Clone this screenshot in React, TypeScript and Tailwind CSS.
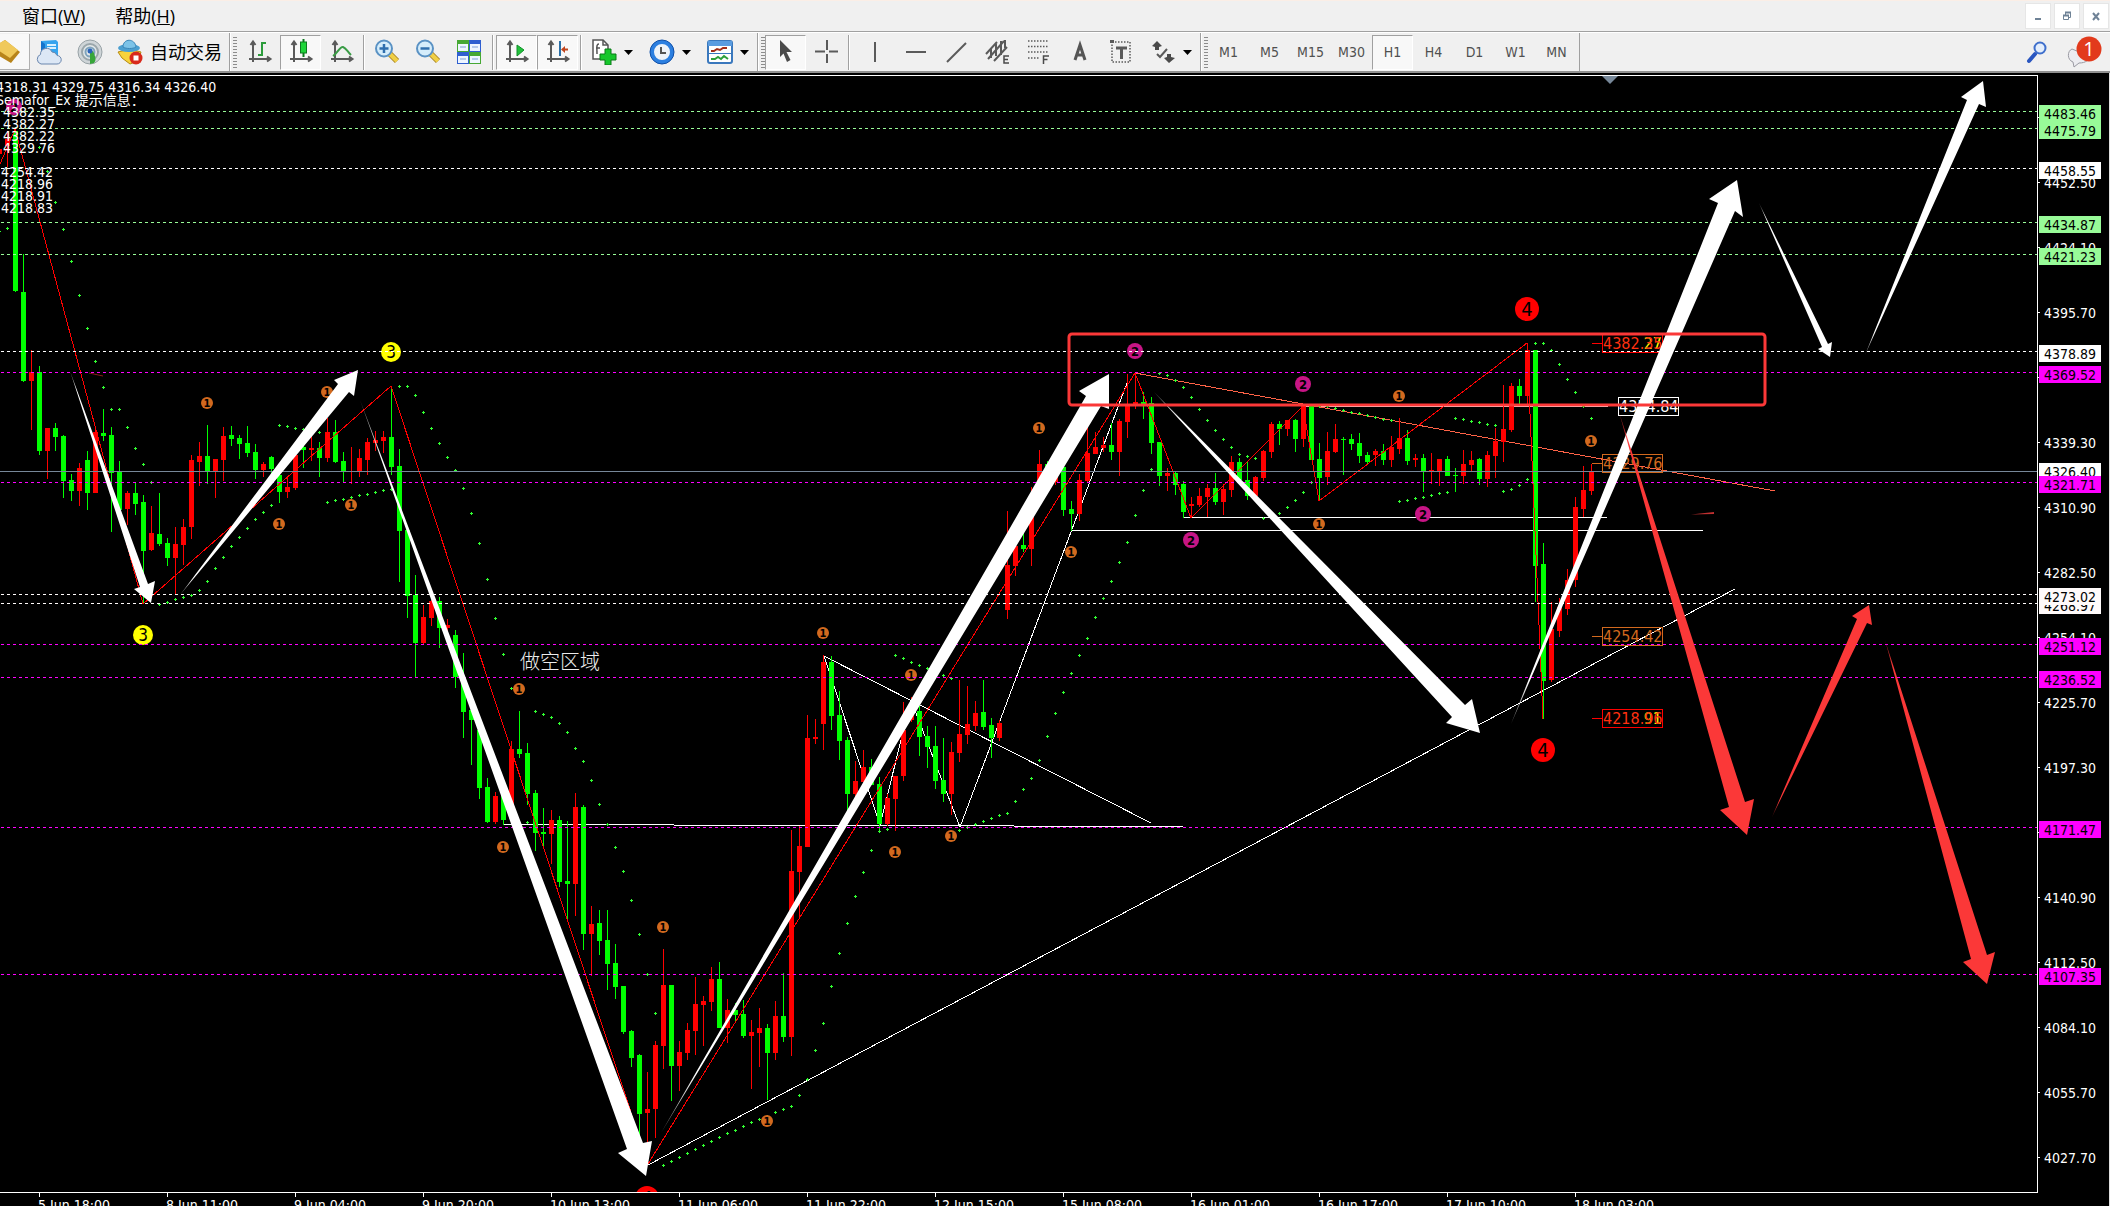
import { Fragment, type ReactNode } from "react";
import clsx from "clsx";

type Point = [number, number];

// [bullish, high, low, body top, body bottom], one entry every 8px
const candles: number[][] = [
  [1, 131, 167, 139, 146], [0, 127, 292, 131, 291], [0, 254, 382, 292, 381], [1, 350, 430, 372, 381],
  [0, 366, 455, 372, 451], [1, 428, 479, 428, 451], [0, 423, 451, 428, 437], [0, 435, 498, 436, 481],
  [0, 474, 501, 480, 491], [1, 463, 506, 468, 491], [0, 451, 510, 460, 493], [1, 428, 493, 432, 493],
  [0, 409, 441, 433, 436], [0, 427, 532, 435, 473], [0, 461, 512, 472, 510], [1, 491, 525, 493, 509],
  [0, 483, 515, 493, 504], [0, 495, 604, 502, 551], [1, 506, 551, 533, 550], [0, 493, 546, 534, 544],
  [0, 538, 566, 543, 558], [1, 527, 594, 544, 558], [1, 519, 565, 527, 545], [1, 455, 539, 460, 527],
  [1, 442, 486, 456, 462], [0, 425, 484, 456, 471], [1, 459, 498, 459, 471], [1, 427, 481, 436, 460],
  [0, 426, 446, 435, 439], [0, 435, 459, 438, 444], [0, 426, 457, 443, 453], [0, 444, 479, 452, 470],
  [1, 462, 477, 464, 470], [0, 456, 475, 457, 469], [0, 469, 503, 475, 492], [1, 477, 498, 487, 492],
  [1, 453, 490, 455, 488], [0, 445, 468, 447, 450], [1, 435, 461, 448, 450], [0, 442, 477, 448, 458],
  [1, 418, 462, 432, 458], [0, 420, 463, 432, 462], [0, 452, 482, 461, 472], [1, 447, 484, 471, 472],
  [1, 449, 477, 458, 472], [1, 438, 475, 442, 460], [1, 431, 451, 440, 443], [1, 431, 453, 437, 441],
  [0, 387, 475, 437, 467], [0, 449, 582, 466, 531], [0, 530, 618, 530, 596], [0, 575, 677, 595, 643],
  [1, 605, 645, 617, 643], [1, 600, 626, 601, 618], [0, 597, 648, 601, 628], [1, 619, 632, 625, 628],
  [0, 630, 688, 635, 677], [0, 653, 738, 677, 712], [0, 707, 765, 710, 720], [0, 730, 799, 730, 788],
  [0, 778, 823, 787, 822], [1, 792, 824, 796, 822], [0, 793, 825, 795, 820], [1, 741, 813, 749, 813],
  [0, 711, 758, 749, 754], [0, 743, 805, 753, 794], [0, 790, 851, 793, 833], [0, 808, 847, 832, 834],
  [1, 810, 864, 820, 834], [0, 816, 887, 820, 882], [0, 821, 921, 881, 884], [1, 793, 916, 807, 884],
  [0, 805, 950, 807, 934], [1, 906, 976, 924, 934], [0, 910, 955, 923, 941], [0, 910, 990, 940, 964],
  [0, 944, 999, 963, 987], [0, 986, 1034, 986, 1032], [0, 1030, 1067, 1031, 1058], [0, 1054, 1140, 1055, 1114],
  [1, 1072, 1147, 1109, 1113], [1, 1041, 1138, 1045, 1109], [1, 949, 1069, 985, 1046], [0, 985, 1101, 985, 1066],
  [1, 1041, 1091, 1052, 1066], [1, 1023, 1060, 1030, 1053], [1, 977, 1055, 1004, 1031], [1, 996, 1046, 1001, 1005],
  [1, 967, 1011, 979, 1002], [0, 962, 1028, 979, 1028], [1, 999, 1043, 1010, 1028], [0, 1003, 1022, 1010, 1015],
  [0, 1000, 1038, 1014, 1036], [1, 1020, 1089, 1032, 1036], [1, 1008, 1067, 1028, 1033], [0, 1024, 1100, 1028, 1053],
  [1, 1001, 1060, 1016, 1053], [0, 973, 1042, 1016, 1037], [1, 830, 1056, 871, 1037], [1, 826, 919, 846, 872],
  [1, 715, 847, 738, 847], [1, 719, 744, 737, 739], [1, 655, 750, 662, 724], [0, 656, 730, 662, 716],
  [0, 691, 760, 715, 741], [0, 737, 813, 740, 794], [1, 761, 797, 781, 794], [1, 750, 782, 767, 782],
  [0, 759, 785, 767, 785], [0, 777, 831, 784, 824], [1, 794, 826, 798, 824], [1, 776, 831, 776, 799],
  [1, 702, 781, 730, 776], [1, 697, 722, 708, 720], [0, 706, 756, 711, 737], [0, 726, 768, 736, 747],
  [0, 726, 789, 746, 781], [0, 738, 802, 780, 794], [1, 742, 815, 752, 794], [1, 680, 762, 734, 753],
  [1, 686, 744, 724, 735], [1, 701, 731, 713, 726], [0, 680, 730, 712, 727], [0, 718, 758, 725, 738],
  [1, 720, 741, 723, 738], [1, 511, 619, 565, 610], [1, 543, 576, 546, 566], [0, 532, 552, 545, 549],
  [1, 487, 566, 517, 549], [1, 450, 482, 464, 482], [0, 461, 482, 464, 480], [1, 470, 485, 472, 482],
  [0, 467, 516, 467, 510], [0, 501, 531, 509, 514], [1, 474, 521, 480, 514], [1, 427, 482, 453, 481],
  [1, 432, 454, 447, 454], [1, 437, 452, 445, 448], [0, 423, 460, 445, 452], [1, 419, 476, 421, 452],
  [1, 374, 438, 405, 422], [1, 373, 409, 402, 404], [0, 392, 419, 402, 404], [0, 397, 454, 403, 443],
  [0, 442, 486, 442, 476], [1, 468, 491, 473, 476], [0, 472, 495, 473, 485], [0, 481, 518, 484, 512],
  [1, 497, 518, 504, 506], [1, 488, 507, 496, 505], [1, 484, 517, 488, 497], [0, 473, 505, 488, 502],
  [1, 484, 515, 489, 502], [1, 456, 497, 462, 490], [0, 458, 480, 462, 480], [0, 461, 500, 480, 496],
  [1, 476, 496, 477, 496], [1, 450, 481, 451, 478], [1, 422, 458, 424, 452], [0, 421, 445, 424, 429],
  [1, 420, 436, 420, 429], [0, 419, 452, 420, 439], [1, 406, 447, 406, 439], [0, 406, 460, 406, 460],
  [0, 443, 501, 459, 478], [1, 432, 485, 451, 477], [1, 424, 453, 439, 452], [0, 437, 475, 439, 440],
  [0, 434, 450, 439, 444], [0, 433, 463, 443, 456], [0, 452, 465, 455, 462], [1, 449, 466, 451, 455],
  [0, 444, 465, 451, 460], [1, 436, 467, 447, 460], [1, 418, 454, 438, 449], [0, 430, 465, 438, 461],
  [1, 454, 467, 458, 460], [0, 454, 492, 458, 471], [1, 453, 484, 470, 471], [1, 459, 486, 459, 471],
  [0, 456, 476, 459, 476], [0, 468, 492, 475, 476], [1, 450, 484, 464, 476], [1, 451, 471, 460, 465],
  [0, 458, 485, 459, 479], [1, 451, 487, 455, 479], [1, 428, 478, 441, 456], [1, 385, 462, 429, 442],
  [1, 383, 432, 386, 430], [0, 379, 404, 386, 396], [1, 343, 404, 350, 396], [0, 350, 602, 350, 566],
  [0, 543, 719, 564, 681], [1, 602, 682, 629, 680], [1, 598, 637, 607, 631], [1, 569, 615, 580, 609],
  [1, 497, 587, 507, 580], [1, 466, 517, 490, 509], [1, 464, 495, 471, 491],
];

// parabolic SAR: first column, then a y for each following candle
const sarRuns: [number, number[]][] = [
  [-1, [231, 228]],
  [39, [147, 171, 202, 229, 261, 295, 328, 361, 387, 409, 409, 427, 448, 464, 482]],
  [159, [604, 602, 599, 597, 595, 590, 581, 568, 557, 546, 537, 528, 519, 512, 505]],
  [279, [425, 426, 428, 429, 430, 432]],
  [327, [502, 500, 499, 497, 495, 494, 492, 490, 489]],
  [399, [386, 386, 395, 412, 428, 443, 457, 470, 488, 513, 543, 579, 618, 654, 688]],
  [527, [822]],
  [535, [711, 714, 717, 723, 732, 748, 761, 780, 804, 824, 847, 871, 900, 934, 974, 1013]],
  [663, [1165, 1161, 1157, 1153, 1149, 1145, 1141, 1137, 1133, 1130, 1126, 1122, 1119, 1116, 1112, 1109, 1106, 1095,
    1079, 1050, 1023, 986, 953, 923, 896, 872, 850, 831, 829]],
  [895, [655, 658, 662, 665, 668, 672, 675, 678]],
  [959, [830, 827, 824, 821, 818, 815, 813, 801, 789, 778, 760, 736, 713, 692, 673, 655, 638, 617, 598, 581, 562, 542,
    515, 490, 469]],
  [1159, [373, 375, 380, 387, 397, 409, 420, 430, 439, 447, 454, 456, 458]],
  [1263, [518, 516, 513, 507, 500, 492, 482]],
  [1319, [406, 406, 408, 410, 412, 413, 415, 417, 419, 420]],
  [1399, [501, 500, 498, 497, 495, 493, 492]],
  [1455, [418, 419, 421, 422, 424, 425]],
  [1503, [491, 489, 485, 479]],
  [1535, [343, 343, 350, 364, 379, 392, 406, 418]],
];

const GREEN = "#98fb98";
const WHITE = "#ffffff";
const SNOW = "#fffafa";
const MAGENTA = "#ff00ff";

// later entries are painted over earlier ones on the price scale
const levels = [
  { y: 111, price: "4483.46", color: GREEN },
  { y: 128, price: "4475.79", color: GREEN },
  { y: 168, price: "4458.55", color: WHITE },
  { y: 222, price: "4434.87", color: GREEN },
  { y: 254, price: "4421.23", color: GREEN },
  { y: 351, price: "4378.89", color: WHITE },
  { y: 372, price: "4369.52", color: MAGENTA },
  { y: 482, price: "4321.71", color: MAGENTA },
  { y: 603, price: "4268.97", color: SNOW },
  { y: 594, price: "4273.02", color: SNOW },
  { y: 644, price: "4251.12", color: MAGENTA },
  { y: 677, price: "4236.52", color: MAGENTA },
  { y: 827, price: "4171.47", color: MAGENTA },
  { y: 974, price: "4107.35", color: MAGENTA },
];

const scale: [number, string][] = [
  [117, ""], [182, "4452.50"], [247, "4424.10"], [312, "4395.70"], [377, ""], [442, "4339.30"],
  [507, "4310.90"], [572, "4282.50"], [637, "4254.10"], [702, "4225.70"], [767, "4197.30"], [832, ""],
  [897, "4140.90"], [962, "4112.50"], [1027, "4084.10"], [1092, "4055.70"], [1157, "4027.70"],
];

const times = [
  "5 Jun 18:00", "8 Jun 11:00", "9 Jun 04:00", "9 Jun 20:00", "10 Jun 13:00", "11 Jun 06:00", "11 Jun 22:00",
  "12 Jun 15:00", "15 Jun 08:00", "16 Jun 01:00", "16 Jun 17:00", "17 Jun 10:00", "18 Jun 03:00",
];

const info: [number, number, string][] = [
  [-4, 92, "4318.31 4329.75 4316.34 4326.40"],
  [-4, 105, "Semafor_Ex 提示信息："],
  [3, 117, "4382.35"], [3, 129, "4382.27"], [3, 141, "4382.22"], [3, 153, "4329.76"],
  [1, 177, "4254.42"], [1, 189, "4218.96"], [1, 201, "4218.91"], [1, 213, "4218.83"],
];

const marks: { n: number; r: number; fill: string; size: number; at: Point[] }[] = [
  {
    n: 1, r: 6, fill: "#d2691e", size: 11,
    at: [[207, 403], [327, 392], [279, 524], [351, 505], [519, 689], [503, 847], [663, 927], [767, 1121], [823, 633],
      [911, 675], [895, 852], [951, 836], [1039, 428], [1071, 552], [1319, 524], [1399, 396], [1591, 441]],
  },
  { n: 2, r: 8, fill: "#c71585", size: 13, at: [[14, 107], [1135, 351], [1191, 540], [1303, 384], [1423, 514]] },
  { n: 3, r: 10, fill: "#ffff00", size: 17, at: [[391, 352], [143, 635]] },
  { n: 4, r: 12, fill: "#ff0000", size: 20, at: [[1527, 309], [1543, 750], [647, 1198]] },
];

// tail, shaft left, head left, tip, head right, shaft right
const arrows: { id: string; color: string; pts: Point[] }[] = [
  { id: "a1", color: "#fff", pts: [[70, 371], [140, 587], [134, 589], [151, 603], [155, 581], [148, 584]] },
  { id: "a2", color: "#fff", pts: [[180, 595], [338, 384], [334, 380], [358, 370], [354, 396], [349, 392]] },
  { id: "a3", color: "#fff", pts: [[360, 400], [627, 1149], [618, 1153], [646, 1176], [652, 1141], [643, 1143]] },
  { id: "a4", color: "#fff", pts: [[661, 1133], [1086, 396], [1079, 391], [1109, 374], [1109, 409], [1101, 406]] },
  { id: "a5", color: "#fff", pts: [[1154, 392], [1452, 717], [1446, 723], [1480, 733], [1472, 699], [1465, 705]] },
  { id: "a6", color: "#fff", pts: [[1511, 724], [1718, 203], [1709, 199], [1737, 180], [1743, 217], [1735, 211]] },
  { id: "a7", color: "#fb3838", pts: [[1619, 412], [1729, 807], [1720, 810], [1747, 835], [1754, 799], [1745, 802]] },
  { id: "a8", color: "#fff", pts: [[1759, 203], [1822, 347], [1818, 349], [1830, 357], [1832, 342], [1828, 344]] },
  { id: "a9", color: "#fff", pts: [[1865, 355], [1967, 100], [1961, 97], [1983, 81], [1986, 107], [1979, 104]] },
  { id: "a10", color: "#fb3838", pts: [[1772, 817], [1857, 619], [1852, 616], [1869, 605], [1872, 625], [1867, 623]] },
  { id: "a11", color: "#fb3838", pts: [[1885, 640], [1971, 959], [1963, 962], [1987, 984], [1995, 952], [1987, 955]] },
];

const tags = [
  { x: 1602, y: 334, color: "#ff0000", text: "4382.35", fill: "#ff3010", under: "27" },
  { x: 1602, y: 454, color: "#d2691e", text: "4329.76", fill: "#d2691e", under: "" },
  { x: 1602, y: 627, color: "#d2691e", text: "4254.42", fill: "#d2691e", under: "" },
  { x: 1602, y: 709, color: "#ff0000", text: "4218.96", fill: "#ff3010", under: "91" },
  { x: 1618, y: 397, color: "#ffffff", text: "4354.84", fill: "#ffffff", under: "" },
];

function Chart() {
  return (
    <svg
      viewBox="0 73 2110 1133"
      className="block w-full bg-black font-['DejaVu_Sans_Condensed','Noto_Sans','Noto_Sans_CJK_SC',sans-serif] text-[14px]"
      role="img"
      aria-label="H1 chart"
    >
      <defs>
        <clipPath id="plot">
          <rect x="0" y="76" width="2037" height="1116" />
        </clipPath>
        {arrows.map(({ id, color, pts }) => (
          <linearGradient
            key={id}
            id={id}
            gradientUnits="userSpaceOnUse"
            x1={pts[0][0]}
            y1={pts[0][1]}
            x2={pts[3][0]}
            y2={pts[3][1]}
          >
            <stop offset="0" stopColor={color} stopOpacity="0.4" />
            <stop offset="0.08" stopColor={color} />
          </linearGradient>
        ))}
      </defs>

      <g clipPath="url(#plot)">
        <g fill="none" stroke="#fff" shapeRendering="crispEdges">
          <path d="M504 824.5H674M674 825.5H1014M1014 826.5H1183" />
          <path d="M1183 517.5H1607M1071 530.5H1703M1304 406.5H1608" />
          <path d="M824 656L880 825L911 700L960 827L1127 383" />
          <path d="M824 656L1151 823M648 1165L1735 589" />
        </g>
        <path d="M1135 373L1775 491" stroke="#ff6347" fill="none" shapeRendering="crispEdges" />

        <rect x="0" y="149" width="2" height="5" fill="#f00" />
        {candles.map(([up, high, low, top, bottom], i) => (
          <g key={i} fill={up ? "#ff0000" : "#00ff00"} shapeRendering="crispEdges">
            <rect x={7 + i * 8} y={high} width="1" height={low - high} />
            <rect x={5 + i * 8} y={top} width="5" height={bottom - top} />
          </g>
        ))}

        <polyline
          points="0,164 15,129 143,604 391,386 648,1164 1135,373 1191,518 1303,406 1319,501 1527,343 1543,719"
          fill="none"
          stroke="#f00"
          shapeRendering="crispEdges"
        />

        {sarRuns.map(([x0, ys]) =>
          ys.map((y, i) => (
            <path
              key={`${x0}-${i}`}
              d={`M${x0 + i * 8 - 1} ${y + 0.5}h3M${x0 + i * 8 + 0.5} ${y - 1}v3`}
              stroke="#32ff32"
              shapeRendering="crispEdges"
            />
          ))
        )}

        {marks.map((m) =>
          m.at.map(([x, y]) => (
            <g key={`${x}-${y}`}>
              <circle cx={x} cy={y} r={m.r} fill={m.fill} />
              <text
                x={x}
                y={y + Math.round(m.size * 0.36)}
                textAnchor="middle"
                fontSize={m.size}
                className={clsx("fill-black", m.n < 3 && "font-bold")}
              >
                {m.n}
              </text>
            </g>
          ))
        )}

        {levels.map((l) => (
          <path key={l.y} d={`M1 ${l.y + 0.5}H2037`} stroke={l.color} strokeDasharray="3 3" shapeRendering="crispEdges" />
        ))}
        <path d="M0 471.5H2037" stroke="#778899" shapeRendering="crispEdges" />
        <path d="M1602 76H1618L1610 84Z" fill="#778899" />

        <g fill="#fff">
          {info.map(([x, y, text]) => (
            <text key={text} x={x} y={y} className="whitespace-pre">
              {text}
            </text>
          ))}
        </g>
        <text
          x="520"
          y="669"
          className="fill-[#ececec] font-['Noto_Sans_CJK_SC',sans-serif] text-[20px] font-light"
        >
          做空区域
        </text>

        {tags.map((t) => (
          <g key={t.y}>
            <rect
              x={t.x + 0.5}
              y={t.y + 0.5}
              width="60"
              height="18"
              fill="none"
              stroke={t.color}
              shapeRendering="crispEdges"
            />
            {t.x === 1602 && <path d={`M1592 ${t.y + 9.5}h10`} stroke={t.color} shapeRendering="crispEdges" />}
            {t.under && (
              <text x={t.x + 60} y={t.y + 15} textAnchor="end" className="fill-[#ffff00] text-[16px]">
                {t.under}
              </text>
            )}
            <text x={t.x + 1} y={t.y + 15} fill={t.fill} className="text-[16px]">
              {t.text}
            </text>
          </g>
        ))}

        {arrows.map(({ id, pts }) => (
          <polygon key={id} points={pts.map((p) => p.join(",")).join(" ")} fill={`url(#${id})`} />
        ))}
        <rect x="1069" y="334" width="696" height="71" rx="3" fill="none" stroke="#fb3838" strokeWidth="3" />
        <path d="M89 373L103 376" stroke="#8b1a1a" />
        <path d="M1691 514.5L1714 512V514Z" fill="#c03030" />
      </g>

      <path d="M0 75.5H2037.5V1192.5H0" fill="none" stroke="#fff" shapeRendering="crispEdges" />
      <rect x="2109" y="73" width="1" height="1133" fill="#e0e0e0" />

      {scale.map(([y, label]) => (
        <Fragment key={y}>
          <path d={`M2038 ${y + 0.5}h2`} stroke="#fff" shapeRendering="crispEdges" />
          <text x="2044" y={y + 6} fill="#fff">
            {label}
          </text>
        </Fragment>
      ))}
      <rect x="2039" y="463" width="62" height="17" fill="#fff" />
      <text x="2044" y="477">4326.40</text>
      {levels.map((l) => (
        <Fragment key={l.price}>
          <rect x="2039" y={l.y - 6} width="62" height="17" fill={l.color} />
          <text x="2044" y={l.y + 8}>
            {l.price}
          </text>
        </Fragment>
      ))}

      {times.map((t, i) => (
        <Fragment key={t}>
          <path d={`M${39.5 + i * 128} 1193v4`} stroke="#fff" shapeRendering="crispEdges" />
          <text x={38 + i * 128} y="1210" fill="#fff">
            {t}
          </text>
        </Fragment>
      ))}
    </svg>
  );
}

function Svg({ children }: { children: ReactNode }) {
  return (
    <svg viewBox="0 0 26 26" className="size-[26px] shrink-0" fill="none" aria-hidden="true">
      {children}
    </svg>
  );
}

const Axes = () => (
  <path d="M6 3v20M2 20h21M3.500 6L6 2.500L8.500 6M20 17.500L23.500 20L20 22.500" stroke="#5a5a5a" strokeWidth="2" />
);

const icons: Record<string, ReactNode> = {
  server: (
    <>
      <path d="M5 2l15-1 2 2v13H5z" fill="#35a4ee" />
      <path d="M5 2l4 3v11H5z" fill="#1474cc" />
      <path d="M11 6h9M11 9h9" stroke="#d8f1ff" strokeWidth="2" />
      <path d="M5 25a5 5 0 0 1-.5-9.500A6 6 0 0 1 16 13a5 5 0 0 1 5 3.500A4 4 0 0 1 21 25z" fill="#dce7f5" stroke="#6a86ad" />
    </>
  ),
  signal: (
    <>
      <circle cx="13" cy="13" r="12" fill="#cfd5d8" stroke="#98a2a6" />
      <circle cx="13" cy="13" r="8" stroke="#9aa6ab" strokeWidth="2" fill="#e3e8e9" />
      <circle cx="13" cy="13" r="4.500" stroke="#7fa3bc" strokeWidth="2" />
      <path d="M13 25V13l3-1c2 5 4 9 1 12z" fill="#37a63a" />
      <circle cx="13" cy="12" r="2.500" fill="#2a62b8" />
    </>
  ),
  auto: (
    <>
      <path d="M1 13l12-3 11 3-3 9-8 3-8-6z" fill="#f7d33c" stroke="#b58a12" />
      <ellipse cx="12" cy="9" rx="11" ry="4" fill="#4b9fd0" />
      <path d="M6 8c0-9 12-9 13 0-3 2-10 2-13 0z" fill="#7cc3e8" stroke="#3a86b8" />
      <circle cx="19" cy="19" r="6.500" fill="#d8291c" />
      <rect x="16.500" y="16.500" width="5" height="5" fill="#fff" />
    </>
  ),
  bars: (
    <>
      <Axes />
      <path d="M15 3v14M15 4h4M11 16h4" stroke="#2c9c3c" strokeWidth="2" />
    </>
  ),
  candles: (
    <>
      <Axes />
      <path d="M15.500 0v18" stroke="#0d7a1f" strokeWidth="2" />
      <rect x="12.500" y="3" width="6" height="11" fill="#1fd53a" stroke="#0d7a1f" />
    </>
  ),
  line: (
    <>
      <Axes />
      <path d="M4 17C9 14 11 7 14 8s4 4 8 8" stroke="#3a9c46" strokeWidth="2" />
    </>
  ),
  zoomIn: (
    <>
      <path d="M16 15l7 7" stroke="#a8862a" strokeWidth="6" />
      <path d="M16 15l7 7" stroke="#f0cf45" strokeWidth="4" />
      <circle cx="10" cy="9.500" r="8" fill="#d5edfb" stroke="#5a92c4" strokeWidth="2" />
      <path d="M5.500 9.500h9M10 5v9" stroke="#2f6fae" strokeWidth="2.500" />
    </>
  ),
  zoomOut: (
    <>
      <path d="M16 15l7 7" stroke="#a8862a" strokeWidth="6" />
      <path d="M16 15l7 7" stroke="#f0cf45" strokeWidth="4" />
      <circle cx="10" cy="9.500" r="8" fill="#d5edfb" stroke="#5a92c4" strokeWidth="2" />
      <path d="M5.500 9.500h9" stroke="#2f6fae" strokeWidth="2.500" />
    </>
  ),
  tile: (
    <>
      <rect x="1" y="1" width="12" height="12" fill="#46a834" />
      <rect x="13" y="1" width="12" height="12" fill="#2f5fd0" />
      <rect x="1" y="13" width="12" height="12" fill="#2f5fd0" />
      <rect x="13" y="13" width="12" height="12" fill="#46a834" />
      <path d="M2 5h10v7H2zM14 5h10v7H14zM2 17h10v7H2zM14 17h10v7H14z" fill="#eef6ff" />
      <path d="M4 8h6M16 8h6M4 20h6M16 20h6" stroke="#7f9fd8" />
    </>
  ),
  scroll: (
    <>
      <Axes />
      <path d="M13 6l7 5-7 6z" fill="#22c23c" stroke="#0f8f28" />
    </>
  ),
  shift: (
    <>
      <Axes />
      <path d="M15 2v15" stroke="#2a70a8" strokeWidth="2" />
      <path d="M23 10.500h-4" stroke="#c0441c" strokeWidth="2" />
      <path d="M20 7l-4 3.500L20 14z" fill="#c0441c" />
    </>
  ),
  indicator: (
    <>
      <path d="M2 1h10l5 5v14H2z" fill="#fff" stroke="#555" strokeWidth="1.500" />
      <path d="M12 1v5h5M8 5c-3 0-2 4-2 10M5 9h4" stroke="#555" strokeWidth="1.500" />
      <path d="M14 10h6v5h5v6h-5v5h-6v-5H9v-6h5z" fill="#16c72c" stroke="#0a7a18" />
    </>
  ),
  clock: (
    <>
      <circle cx="13" cy="13" r="10" fill="#eef3f9" stroke="#2c7fe0" strokeWidth="4" />
      <circle cx="13" cy="13" r="12" stroke="#0f4fa8" />
      <path d="M12 8v6h5" stroke="#555" strokeWidth="2" />
    </>
  ),
  template: (
    <>
      <rect x="1" y="2" width="24" height="22" rx="2" fill="#fff" stroke="#3a78bd" strokeWidth="2" />
      <rect x="1" y="2" width="24" height="5" fill="#5a9ce0" />
      <path d="M4 12h3l3-2 3 1 3-2h4" stroke="#a32e18" strokeWidth="2" />
      <path d="M2 14.500h22" stroke="#3a78bd" />
      <path d="M4 20h4l3-2 3 2 3-3 4 3" stroke="#2ea03a" strokeWidth="2" />
    </>
  ),
  cursor: <path d="M7 1l12 12h-5.500l4 8-3.500 2-3.500-8.500L7 18z" fill="#4a4a4a" />,
  cross: <path d="M13 1v10M13 15v9M1 12.500h10M15 12.500h9" stroke="#5a5a5a" strokeWidth="2" />,
  vline: <path d="M13 3v20" stroke="#5a5a5a" strokeWidth="2" />,
  hline: <path d="M3 13h20" stroke="#5a5a5a" strokeWidth="2" />,
  trend: <path d="M3 23L22 4" stroke="#5a5a5a" strokeWidth="2" />,
  channel: (
    <>
      <path d="M1 15L12 3M3 20L19 2M9 22L22 8M6 9v10M11 5v12M16 2v14M20 1v8" stroke="#5a5a5a" strokeWidth="2" />
      <path d="M24 17h-5v7h5M19 20.500h4" stroke="#4a4a4a" strokeWidth="1.500" />
    </>
  ),
  fibo: (
    <>
      <path d="M2 2h21M2 7.500h21M2 13h21M2 19h11" stroke="#5a5a5a" strokeWidth="1.500" strokeDasharray="1.500 1.500" />
      <path d="M17.500 25v-8h5.500M17.500 20.500h4" stroke="#4a4a4a" strokeWidth="1.500" />
    </>
  ),
  textA: <path d="M8 21l5-15 5 15M9.500 16h7" stroke="#555" strokeWidth="3" />,
  label: (
    <>
      <rect x="4" y="3" width="18" height="20" stroke="#5a5a5a" strokeWidth="1.500" strokeDasharray="1.500 1.500" />
      <path d="M8 9h11M13.500 9v11" stroke="#5a5a5a" strokeWidth="3" />
      <rect x="2" y="1" width="4" height="3" fill="#5a5a5a" />
    </>
  ),
  shapes: (
    <>
      <path d="M7 2l5 5-3 1v3H5V8L2 7z" fill="#4a4a4a" />
      <path d="M7 15l3 3 7-8" stroke="#5a5a5a" strokeWidth="2" />
      <path d="M17 15h4v3l4 1-6 5-5-5 3-1z" fill="#4a4a4a" />
    </>
  ),
};

function Sep() {
  return <div className="h-[35px] w-[2px] shrink-0 border-r border-l border-r-white border-l-[#a0a0a0]" />;
}

function Grip() {
  return (
    <div className="flex shrink-0">
      <div className="h-[38px] w-[2px] border-r border-l border-r-white border-l-[#a0a0a0]" />
      <div className="mt-1 ml-[2px] h-[32px] w-[4px] bg-[repeating-linear-gradient(#8c8c8c_0_1px,#f0f0f0_1px_3px)]" />
    </div>
  );
}

function Tool({ icon, name, active }: { icon: string; name: string; active?: boolean }) {
  return (
    <button
      type="button"
      aria-label={name}
      aria-pressed={!!active}
      className={clsx(
        "flex h-[35px] w-[41px] shrink-0 items-center justify-center border",
        active ? "border-t-[#a0a0a0] border-r-white border-b-white border-l-[#a0a0a0] bg-[#f8f8f8]" : "border-transparent"
      )}
    >
      <Svg>{icons[icon]}</Svg>
    </button>
  );
}

function MenuTool({ icon, name, last }: { icon: string; name: string; last?: boolean }) {
  return (
    <button
      type="button"
      aria-label={name}
      className={clsx("flex h-[35px] shrink-0 items-center gap-[7px] pl-[5px]", last ? "w-[55px]" : "w-[58px]")}
    >
      <Svg>{icons[icon]}</Svg>
      <svg viewBox="0 0 9 5" className="h-[5px] w-[9px]" aria-hidden="true">
        <path d="M0 0h9L4.500 5z" />
      </svg>
    </button>
  );
}

const timeframes = ["M1", "M5", "M15", "M30", "H1", "H4", "D1", "W1", "MN"];

function Toolbar() {
  return (
    <div className="flex h-[41px] items-center overflow-hidden border-t border-b-2 border-t-white border-b-[#909090] bg-[#f0f0f0]">
      <button type="button" aria-label="Market" className="h-[36px] w-[30px] shrink-0 border-r border-b border-[#b0b0b0] bg-[#f8f8f8]">
        <svg viewBox="0 0 29 35" className="block h-[35px] w-[29px]" aria-hidden="true">
          <path d="M-4 12L5 6L20 18L11 29L-4 20z" fill="#b8841a" />
          <path d="M-4 11L5 6L18 16L10 24L-4 15z" fill="#f0c95a" />
        </svg>
      </button>
      <div className="flex w-[80px] shrink-0 gap-[15px] pl-[6px]">
        <button type="button" aria-label="Cloud"><Svg>{icons.server}</Svg></button>
        <button type="button" aria-label="Signals"><Svg>{icons.signal}</Svg></button>
      </div>
      <button type="button" className="flex w-[119px] shrink-0 items-center gap-[7px] pl-[7px] text-[18px] whitespace-nowrap">
        <Svg>{icons.auto}</Svg>
        自动交易
      </button>
      <Grip />
      <div className="ml-[2px] flex shrink-0">
        <Tool icon="bars" name="Bar chart" />
        <Tool icon="candles" name="Candlesticks" active />
        <Tool icon="line" name="Line chart" />
      </div>
      <div className="mx-[1px]"><Sep /></div>
      <Tool icon="zoomIn" name="Zoom in" />
      <Tool icon="zoomOut" name="Zoom out" />
      <Tool icon="tile" name="Tile windows" />
      <div className="ml-[3px]"><Sep /></div>
      <div className="ml-[2px] flex shrink-0">
        <Tool icon="scroll" name="Auto scroll" active />
        <Tool icon="shift" name="Chart shift" active />
      </div>
      <div className="mr-1 ml-[2px]"><Sep /></div>
      <MenuTool icon="indicator" name="Indicators" />
      <MenuTool icon="clock" name="Periods" />
      <MenuTool icon="template" name="Templates" last />
      <Grip />
      <Tool icon="cursor" name="Cursor" active />
      <Tool icon="cross" name="Crosshair" />
      <div className="mr-1 ml-[1px]"><Sep /></div>
      <Tool icon="vline" name="Vertical line" />
      <Tool icon="hline" name="Horizontal line" />
      <Tool icon="trend" name="Trendline" />
      <Tool icon="channel" name="Equidistant channel" />
      <Tool icon="fibo" name="Fibonacci" />
      <Tool icon="textA" name="Text" />
      <Tool icon="label" name="Text label" />
      <div className="ml-1"><MenuTool icon="shapes" name="Arrows" last /></div>
      <Grip />
      {timeframes.map((tf) => (
        <button
          key={tf}
          type="button"
          aria-pressed={tf === "H1"}
          className={clsx(
            "h-[35px] w-[41px] shrink-0 border font-['DejaVu_Sans_Condensed','Noto_Sans',sans-serif] text-[14px] text-[#505050]",
            tf === "H1"
              ? "border-t-[#a0a0a0] border-r-white border-b-white border-l-[#a0a0a0] bg-[#f8f8f8]"
              : "border-transparent"
          )}
        >
          {tf}
        </button>
      ))}
      <div className="ml-[2px] h-[38px] w-px bg-[#a0a0a0]" />
      <div className="ml-auto flex items-center gap-4 pr-[8px]">
        <button type="button" aria-label="Search">
          <Svg>
            <path d="M5 22l6-7" stroke="#2a56c0" strokeWidth="4" strokeLinecap="round" />
            <circle cx="16" cy="9" r="5.500" fill="#e4eefc" stroke="#3f6fcc" strokeWidth="2" />
          </Svg>
        </button>
        <button type="button" aria-label="1 notification" className="flex h-[36px] w-[36px] text-[20px] text-white">
          <svg viewBox="0 0 36 36" className="size-[36px]" aria-hidden="true">
            <path d="M6 15c-5 2-5 11 1 13l1 5 5-4c7 0 10-3 10-7z" fill="#ececf0" stroke="#9a9aa2" />
            <circle cx="23" cy="15" r="12.500" fill="#e23a1c" />
            <text x="23" y="22" textAnchor="middle" fill="#fff">1</text>
          </svg>
        </button>
      </div>
    </div>
  );
}

function MenuBar() {
  return (
    <div className="flex h-[32px] items-center justify-between border-t border-b border-t-[#fbeee6] border-b-[#a0a0a0] bg-[#f0f0f0]">
      <nav className="flex gap-[30px] pl-[22px] text-[18px]">
        <button type="button">窗口(<u>W</u>)</button>
        <button type="button">帮助(<u>H</u>)</button>
      </nav>
      <div className="flex gap-[3px] pr-px text-[#6f8296]">
        <button type="button" aria-label="Minimize" className="size-[26px] border border-[#e6e6e6] bg-white">
          <svg viewBox="0 0 24 24" aria-hidden="true"><path d="M9 15h6" stroke="currentColor" strokeWidth="2" /></svg>
        </button>
        <button type="button" aria-label="Restore" className="size-[26px] border border-[#e6e6e6] bg-white">
          <svg viewBox="0 0 24 24" fill="none" aria-hidden="true">
            <path d="M10.500 11V8.500h5v5H14M8.500 11.500h5v4h-5z" stroke="currentColor" />
            <path d="M10 8.500h6M8 11.500h6" stroke="currentColor" strokeWidth="2" />
          </svg>
        </button>
        <button type="button" aria-label="Close" className="size-[26px] border border-[#e6e6e6] bg-white">
          <svg viewBox="0 0 24 24" aria-hidden="true">
            <path d="M9 9l6 7M15 9l-6 7" stroke="currentColor" strokeWidth="2" />
          </svg>
        </button>
      </div>
    </div>
  );
}

export default function App() {
  return (
    <div className="flex min-h-screen flex-col overflow-hidden bg-black font-['Open_Sans','Noto_Sans_CJK_SC',sans-serif] text-black">
      <MenuBar />
      <Toolbar />
      <Chart />
    </div>
  );
}
